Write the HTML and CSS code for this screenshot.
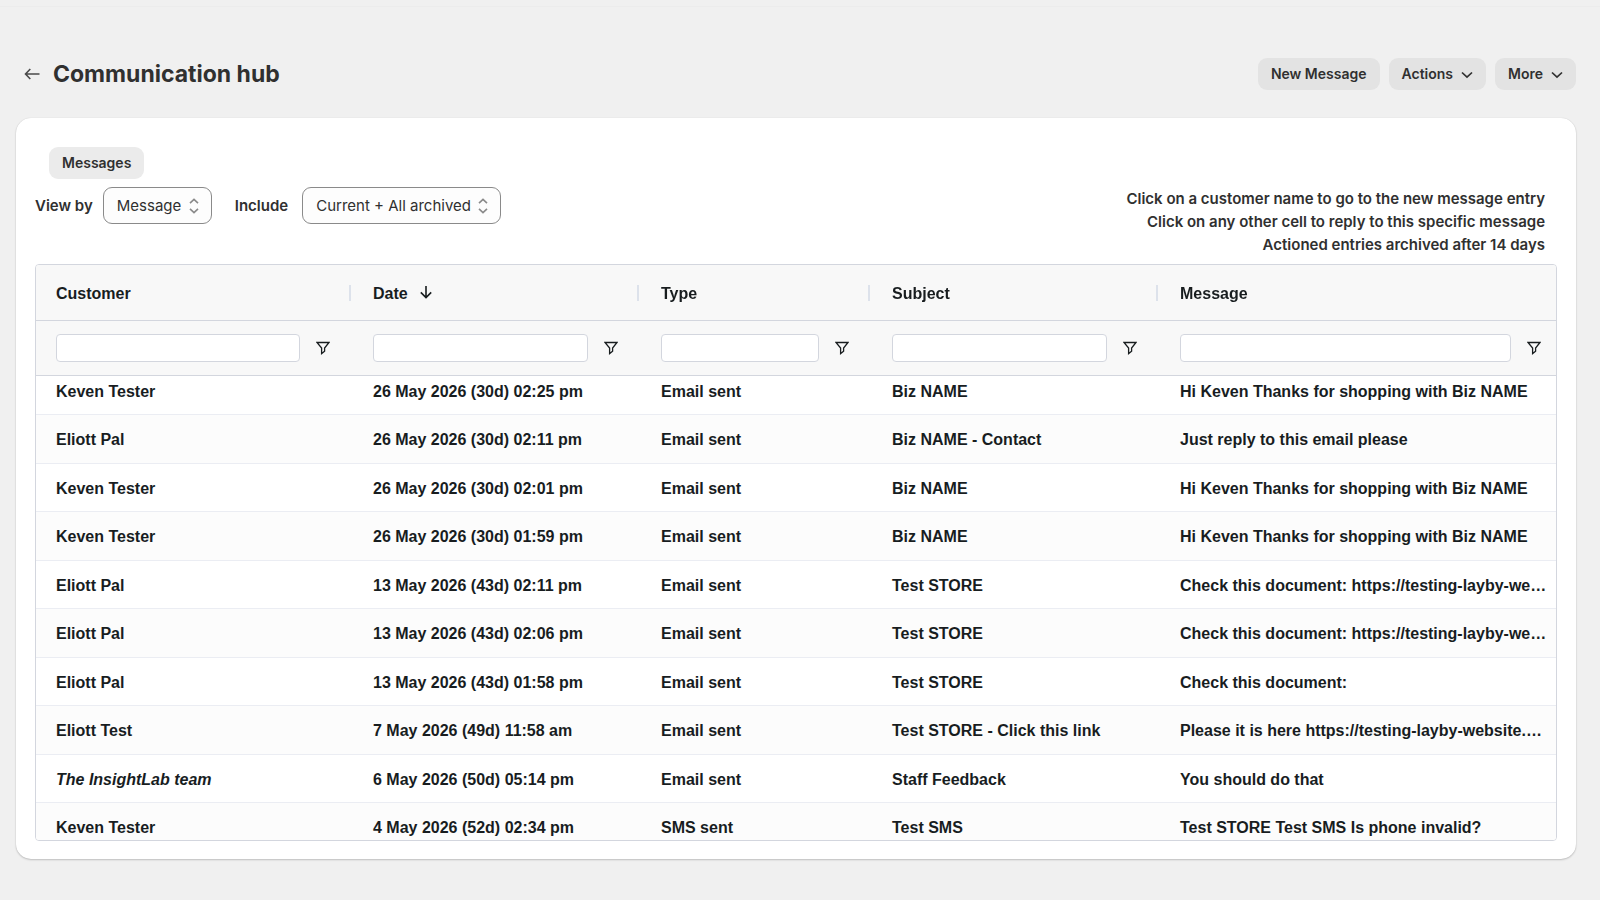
FILE: index.html
```html
<!DOCTYPE html>
<html lang="en">
<head>
  <meta charset="UTF-8" />
  <meta name="viewport" content="width=device-width, initial-scale=1.0"/>
  <title>Communication hub</title>
  <link rel="stylesheet" href="styles.css">
</head>
<body>
  <!-- shared icons -->
  <svg class="sprite" aria-hidden="true">
    <symbol id="icon-chevron" viewBox="0 0 12 8">
      <path d="M1 1.5 L6 6.2 L11 1.5" />
    </symbol>
    <symbol id="icon-updown" viewBox="0 0 10 16">
      <path d="M1 5.2 L5 1.4 L9 5.2 M1 10.8 L5 14.6 L9 10.8" />
    </symbol>
    <symbol id="icon-filter" viewBox="0 0 14 14">
      <path d="M1 1.5 H13 L8.6 7 V10.2 L5.6 12.6 V7 Z" />
    </symbol>
  </svg>

  <div class="topline"></div>
  <div class="page">
    <header class="page-header">
      <a class="back" href="#" aria-label="Back">
        <svg viewBox="0 0 16 12"><path d="M15 6 H1.5 M5.8 1 L1 6 L5.8 11" /></svg>
      </a>
      <h1>Communication hub</h1>
      <div class="actions">
        <button type="button" class="btn">New Message</button>
        <button type="button" class="btn">Actions <svg class="chevron"><use href="#icon-chevron" /></svg></button>
        <button type="button" class="btn">More <svg class="chevron"><use href="#icon-chevron" /></svg></button>
      </div>
    </header>

    <main class="card">
      <div class="tabs">
        <button type="button" class="tab">Messages</button>
      </div>

      <div class="toolbar">
        <div class="field">
          <label for="viewBy">View by</label>
          <div class="select">
            <select id="viewBy"><option>Message</option></select>
            <svg><use href="#icon-updown" /></svg>
          </div>
        </div>
        <div class="field">
          <label for="include" class="wide">Include</label>
          <div class="select">
            <select id="include"><option>Current + All archived</option></select>
            <svg><use href="#icon-updown" /></svg>
          </div>
        </div>
        <div class="hints">
          <p>Click on a customer name to go to the new message entry</p>
          <p>Click on any other cell to reply to this specific message</p>
          <p>Actioned entries archived after 14 days</p>
        </div>
      </div>

      <div class="grid" id="grid">
        <table>
          <colgroup>
            <col class="col-customer"><col class="col-date"><col class="col-type"><col class="col-subject"><col>
          </colgroup>
          <thead>
            <tr class="titles">
              <th>Customer</th>
              <th>Date <svg class="sort" viewBox="0 0 12 14"><path d="M6 1 V12.5 M0.8 7.4 L6 12.6 L11.2 7.4" /></svg></th>
              <th>Type</th>
              <th>Subject</th>
              <th>Message</th>
            </tr>
            <tr class="filters">
              <td><div class="filter"><input type="text" aria-label="Customer filter"><button type="button" aria-label="Filter customer"><svg><use href="#icon-filter" /></svg></button></div></td>
              <td><div class="filter"><input type="text" aria-label="Date filter"><button type="button" aria-label="Filter date"><svg><use href="#icon-filter" /></svg></button></div></td>
              <td><div class="filter"><input type="text" aria-label="Type filter"><button type="button" aria-label="Filter type"><svg><use href="#icon-filter" /></svg></button></div></td>
              <td><div class="filter"><input type="text" aria-label="Subject filter"><button type="button" aria-label="Filter subject"><svg><use href="#icon-filter" /></svg></button></div></td>
              <td><div class="filter"><input type="text" aria-label="Message filter"><button type="button" aria-label="Filter message"><svg><use href="#icon-filter" /></svg></button></div></td>
            </tr>
          </thead>
          <tbody>
            <tr><td>Keven Tester</td><td>26 May 2026 (30d) 02:25 pm</td><td>Email sent</td><td>Biz NAME</td><td>Hi Keven Thanks for shopping with Biz NAME</td></tr>
            <tr><td>Eliott Pal</td><td>26 May 2026 (30d) 02:11 pm</td><td>Email sent</td><td>Biz NAME - Contact</td><td>Just reply to this email please</td></tr>
            <tr><td>Keven Tester</td><td>26 May 2026 (30d) 02:01 pm</td><td>Email sent</td><td>Biz NAME</td><td>Hi Keven Thanks for shopping with Biz NAME</td></tr>
            <tr><td>Keven Tester</td><td>26 May 2026 (30d) 01:59 pm</td><td>Email sent</td><td>Biz NAME</td><td>Hi Keven Thanks for shopping with Biz NAME</td></tr>
            <tr><td>Eliott Pal</td><td>13 May 2026 (43d) 02:11 pm</td><td>Email sent</td><td>Test STORE</td><td>Check this document: https://testing-layby-we…</td></tr>
            <tr><td>Eliott Pal</td><td>13 May 2026 (43d) 02:06 pm</td><td>Email sent</td><td>Test STORE</td><td>Check this document: https://testing-layby-we…</td></tr>
            <tr><td>Eliott Pal</td><td>13 May 2026 (43d) 01:58 pm</td><td>Email sent</td><td>Test STORE</td><td>Check this document:</td></tr>
            <tr><td>Eliott Test</td><td>7 May 2026 (49d) 11:58 am</td><td>Email sent</td><td>Test STORE - Click this link</td><td>Please it is here https://testing-layby-website.…</td></tr>
            <tr><td><em>The InsightLab team</em></td><td>6 May 2026 (50d) 05:14 pm</td><td>Email sent</td><td>Staff Feedback</td><td>You should do that</td></tr>
            <tr><td>Keven Tester</td><td>4 May 2026 (52d) 02:34 pm</td><td>SMS sent</td><td>Test SMS</td><td>Test STORE Test SMS Is phone invalid?</td></tr>
          </tbody>
        </table>
      </div>
    </main>
  </div>

  <script>
    // the list opens slightly scrolled under the sticky header
    document.getElementById('grid').scrollTop = 9;
  </script>
</body>
</html>
```

FILE: styles.css
```css
* {
  box-sizing: border-box;
}
body {
  margin: 0;
  background: #f0f0f0;
  color: #303030;
  font-family: Inter, sans-serif;
  font-size: 15px;
}
button, select, input {
  font-family: inherit;
  color: inherit;
}
svg {
  fill: none;
  stroke: currentColor;
}
.sprite {
  display: none;
}
.topline {
  height: 7px;
  border-bottom: 1px solid #ececec;
}
.page {
  padding: 51px 24px 40px 16px;
}

/* header */
.page-header {
  display: flex;
  align-items: center;
  padding-left: 8px;
  margin-bottom: 28px;
}
.back {
  display: flex;
  color: #4a4a4a;
}
.back svg {
  width: 17px;
  height: 12px;
  stroke-width: 1.6;
}
h1 {
  margin: 0 0 0 12px;
  font-size: 23px;
  line-height: 32px;
  font-weight: 700;
}
.actions {
  display: flex;
  gap: 9px;
  margin-left: auto;
}
.btn, .tab {
  display: flex;
  align-items: center;
  gap: 8px;
  height: 32px;
  padding: 0 13px 2px;
  border: none;
  border-radius: 9px;
  background: #e3e3e3;
  font-size: 14px;
  font-weight: 600;
  cursor: pointer;
}
.chevron {
  width: 12px;
  height: 8px;
  margin-top: 3px;
  stroke-width: 1.7;
}

/* card */
.card {
  padding: 29px 19px 18px;
  border-radius: 15px;
  background: #fff;
  box-shadow: 0 1px 2px rgba(0, 0, 0, 0.2), 0 0 1px rgba(0, 0, 0, 0.15);
}
.tabs {
  padding-left: 14px;
}
.tab {
  background: #ebebeb;
}
.toolbar {
  display: flex;
  align-items: flex-start;
  gap: 23px;
  padding-top: 8px;
}
.field {
  display: flex;
  align-items: center;
  gap: 10px;
}
.field label {
  font-weight: 600;
}
.field .wide {
  margin-right: 4px;
}
.select {
  position: relative;
}
.select select {
  appearance: none;
  height: 37px;
  padding: 0 29px 0 13px;
  border: 1px solid #8a8a8a;
  border-radius: 9px;
  background: #fdfdfd;
  font-size: 15px;
}
.select svg {
  position: absolute;
  top: 11px;
  right: 13px;
  width: 10px;
  height: 16px;
  color: #8a8a8a;
  stroke-width: 1.6;
  pointer-events: none;
}
.hints {
  margin-left: auto;
  padding: 0 12px 8px 0;
  text-align: right;
  font-weight: 600;
  line-height: 23px;
}
.hints p {
  margin: 0;
}

/* message table */
.grid {
  height: calc(100vh - 323px);
  overflow-y: auto;
  scrollbar-width: none;
  border: 1px solid #d3d6de;
  border-radius: 4px;
  color: #181d1f;
  font-family: "Liberation Sans", Arial, sans-serif;
  font-size: 16px;
  font-weight: 700;
}
table {
  width: 100%;
  table-layout: fixed;
  border-collapse: separate;
  border-spacing: 0;
}
.col-customer {
  width: 317px;
}
.col-date, .col-subject {
  width: 288px;
}
.col-type {
  width: 231px;
}
thead {
  position: sticky;
  top: 0;
  z-index: 1;
}
th, td {
  padding: 0 20px;
  text-align: left;
  white-space: nowrap;
}
th:last-child, td:last-child {
  padding-right: 12px;
}
.titles th {
  height: 56px;
  padding-top: 2px;
  border-bottom: 1px solid #d3d6de;
  background: linear-gradient(#dde2eb, #dde2eb) right 2px center / 2px 16px no-repeat #f8f8f8;
}
.titles th:last-child {
  background: #f8f8f8;
}
.sort {
  width: 12px;
  height: 14px;
  margin-left: 8px;
  stroke-width: 1.6;
}
.filters td {
  height: 55px;
  border-bottom: 1px solid #d3d6de;
  background: #f8f8f8;
}
.filter {
  display: flex;
  align-items: center;
  gap: 13px;
}
.filter input {
  flex: 1;
  min-width: 0;
  height: 28px;
  padding: 0 6px;
  border: 1px solid #d3d6de;
  border-radius: 4px;
  background: #fff;
}
.filter button {
  display: flex;
  justify-content: center;
  width: 20px;
  padding: 0;
  border: none;
  background: none;
}
.filter svg {
  width: 14px;
  height: 14px;
  stroke-width: 1.3;
}
tbody td {
  height: 48px;
  padding-top: 2px;
  overflow: hidden;
  text-overflow: ellipsis;
  border-bottom: 1px solid #ebedf3;
}
tbody td:last-child {
  padding-right: 2px;
}
tbody tr:nth-child(even) td {
  height: 49px;
  background: #fcfcfc;
}
```
